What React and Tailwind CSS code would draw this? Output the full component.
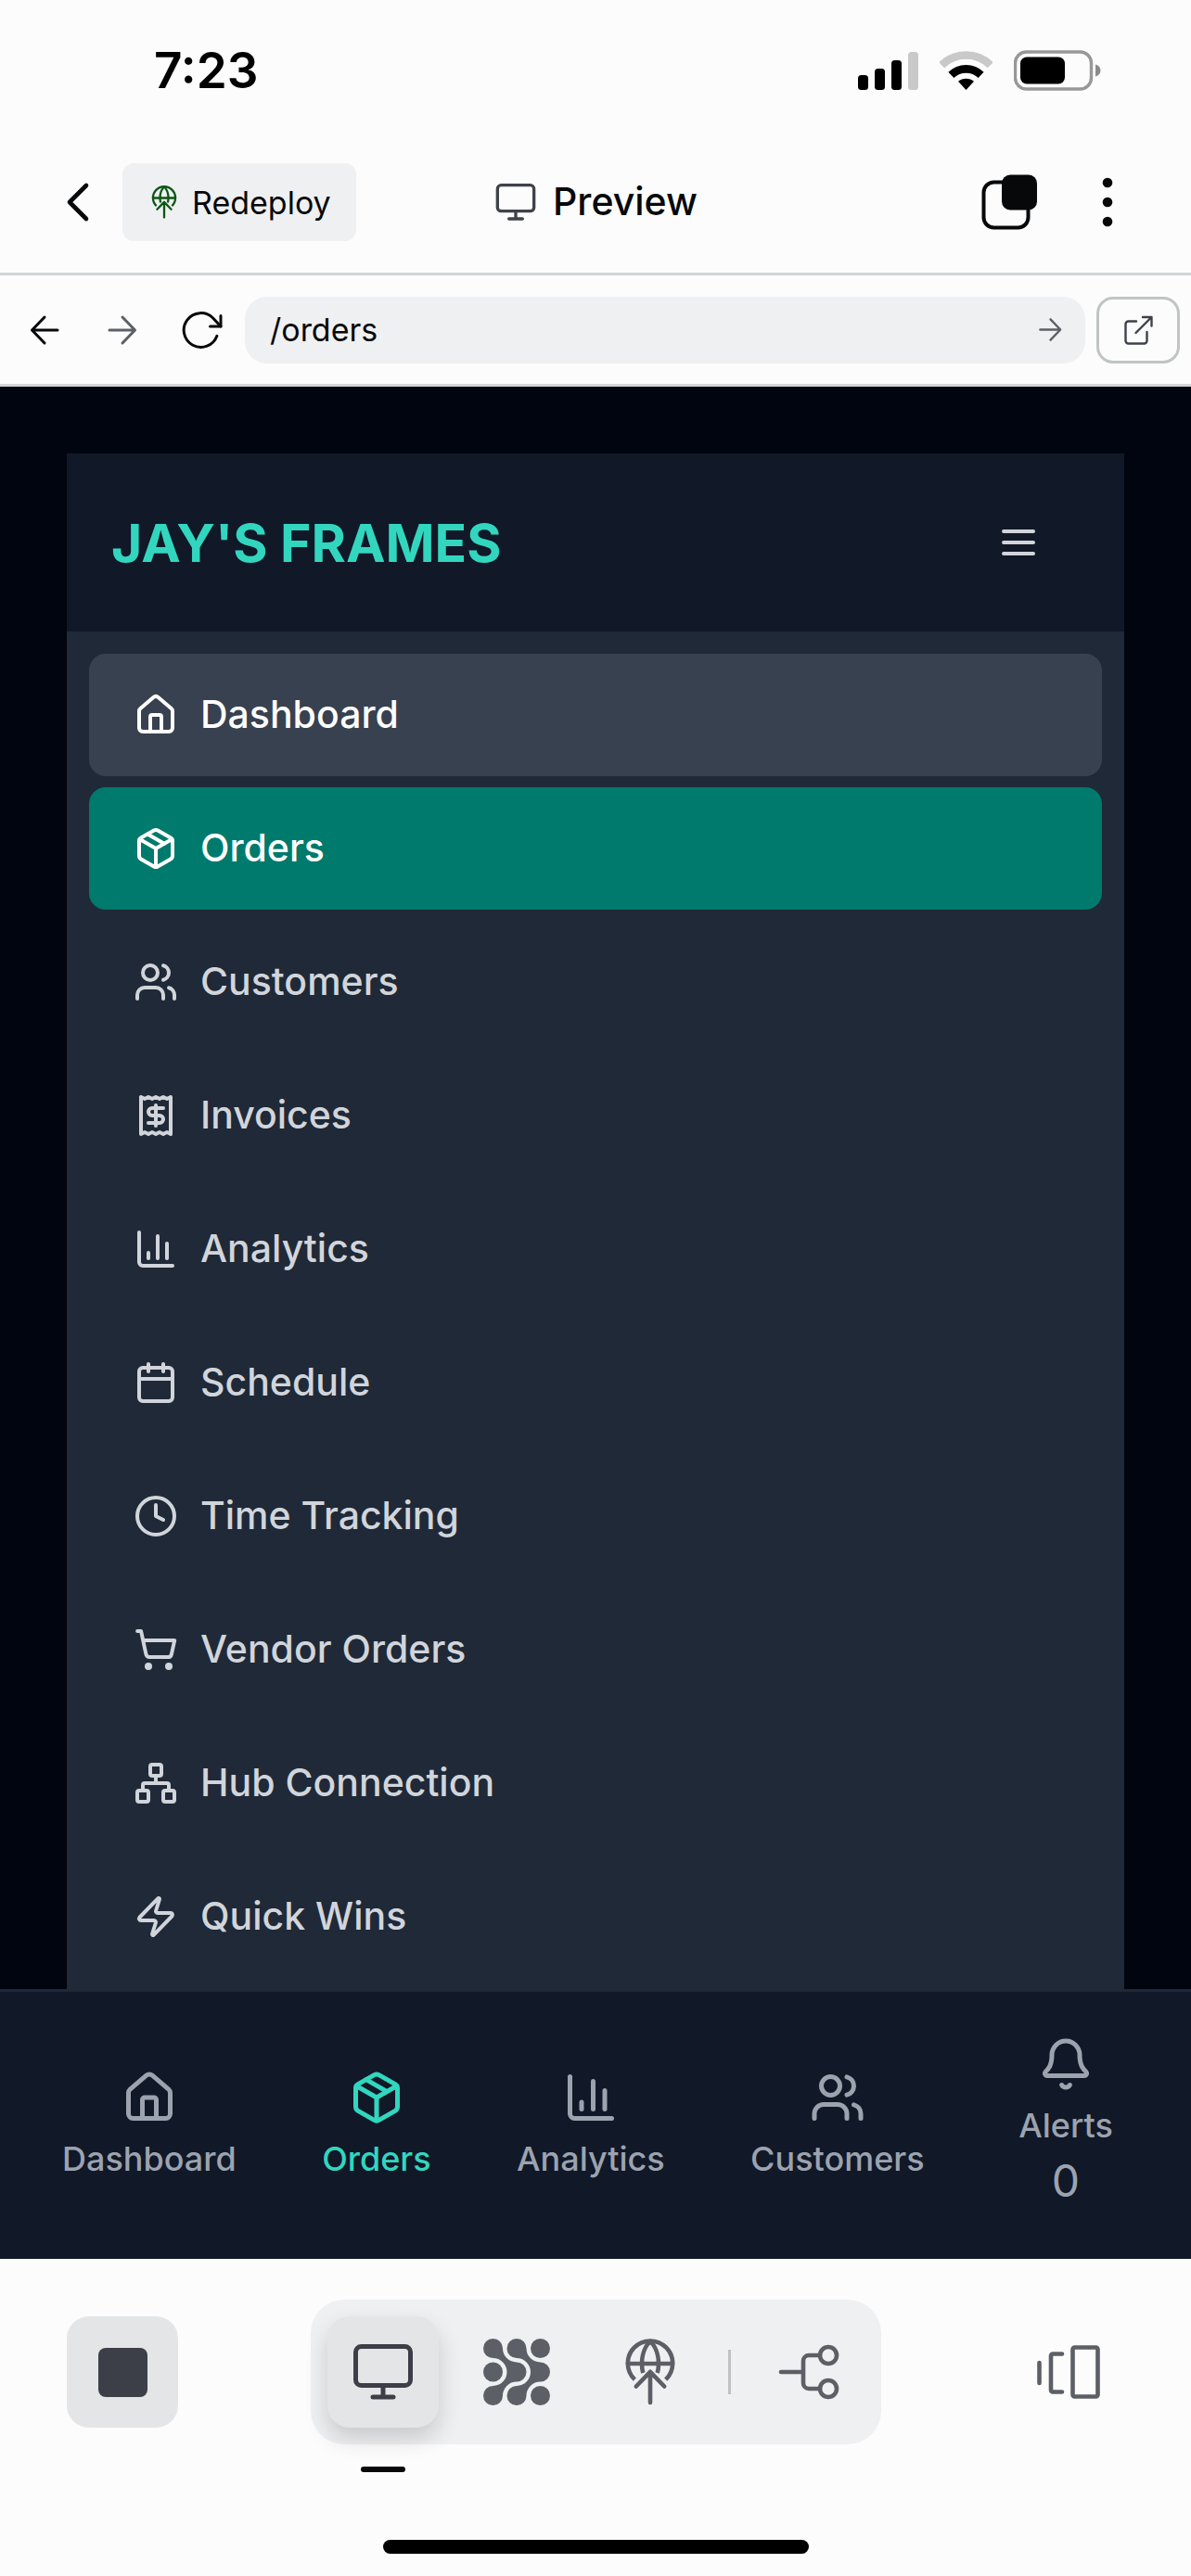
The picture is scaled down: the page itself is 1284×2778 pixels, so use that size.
import {
  Bell,
  Calendar,
  ChartColumn,
  Clock,
  House,
  Network,
  Package,
  Receipt,
  ShoppingCart,
  Users,
  Zap,
} from "lucide-react";

const stroke = {
  fill: "none",
  stroke: "currentColor",
  strokeLinecap: "round",
  strokeLinejoin: "round",
};

function MonitorIcon({ className }) {
  return (
    <svg viewBox="0 0 72 72" className={className} strokeWidth="5" {...stroke}>
      <rect x="6.5" y="8.5" width="59" height="42" rx="6" />
      <path d="M36 50.5V63M25 63h22" />
    </svg>
  );
}

function PublishIcon({ className }) {
  return (
    <svg viewBox="0 0 72 72" className={className} strokeWidth="4.6" {...stroke}>
      <path d="M12 27h48" />
      <path strokeLinecap="butt" d="M19.3 44.2A24.2 24.2 0 1 1 52.7 44.2" />
      <path strokeLinecap="butt" d="M28.3 37C27.4 34 27 30.6 27 27C27 17.5 30.4 8 36 3C41.6 8 45 17.5 45 27C45 30.6 44.6 34 43.7 37" />
      <path d="M36 36v33M20.8 51.5L36 35.8L51.2 51.5" />
    </svg>
  );
}

function AgentIcon({ className }) {
  const chain =
    "M21 10.5A15 15 0 0 0 36 25.5A10.5 10.5 0 0 1 36 46.5A15 15 0 0 0 21 61.5A10.5 10.5 0 1 1 10.5 51A15 15 0 0 0 10.5 21A10.5 10.5 0 1 1 21 10.5Z";
  return (
    <svg viewBox="0 0 72 72" className={className} fill="currentColor">
      <path d={chain} />
      <path d={chain} transform="translate(25.5 0)" />
      <circle cx="61.5" cy="10.5" r="10.5" />
      <circle cx="10.5" cy="36" r="10.5" />
      <circle cx="61.5" cy="61.5" r="10.5" />
    </svg>
  );
}

function BranchIcon({ className }) {
  return (
    <svg viewBox="0 0 72 72" className={className} strokeWidth="4.6" {...stroke}>
      <path d="M6 36h24M48 18H36a6 6 0 0 0-6 6v24a6 6 0 0 0 6 6h12" />
      <circle cx="57" cy="18" r="9" />
      <circle cx="57" cy="54" r="9" />
    </svg>
  );
}

function PanesIcon({ className }) {
  return (
    <svg viewBox="0 0 72 72" className={className} strokeWidth="4.6" {...stroke}>
      <path d="M4.5 26v22M29 16.5H19a2 2 0 0 0-2 2v37a2 2 0 0 0 2 2h10" />
      <rect x="40.5" y="9.5" width="27" height="53" rx="2" />
    </svg>
  );
}

function ArrowIcon({ className, flip }) {
  return (
    <svg viewBox="0 0 34 34" className={className} strokeWidth="3" {...stroke}>
      <path d={flip ? "M31 17H4M17 3L3.5 17L17 31" : "M3 17h27M17 3l13.5 14L17 31"} />
    </svg>
  );
}

function StatusIcons() {
  return (
    <div className="flex items-center gap-[23px]">
      <svg viewBox="0 0 65 42" className="h-[42px] w-[65px]">
        <rect x="0" y="26" width="11" height="16" rx="3.5" />
        <rect x="18" y="19" width="11" height="23" rx="3.5" />
        <rect x="36" y="10" width="11" height="32" rx="3.5" />
        <rect x="54" y="1" width="11" height="41" rx="3.5" fill="#c9c9c9" />
      </svg>
      <svg viewBox="0 0 57 42" className="h-[42px] w-[57px]" fill="none" strokeWidth="8.6">
        <path d="M2.2 15.3A37.5 37.5 0 0 1 54.8 15.3" stroke="#c9c9c9" />
        <path d="M12.4 25.9A23 23 0 0 1 44.6 25.9" stroke="#000" />
        <path d="M20 32.8A13 13 0 0 1 37 32.8L28.5 42Z" fill="#000" stroke="none" />
      </svg>
      <svg viewBox="0 0 94 44" className="h-[44px] w-[94px]">
        <rect x="1.5" y="2" width="82" height="40" rx="12" fill="none" stroke="#989898" strokeWidth="3.4" />
        <rect x="7" y="7.5" width="48" height="29" rx="7" />
        <path d="M88 15.5c3.5 1 5.5 3.5 5.5 6.5s-2 5.5-5.5 6.5z" fill="#8a8a8a" />
      </svg>
    </div>
  );
}

const menu = [
  { label: "Dashboard", Icon: House, look: "bg-[#384150] text-white" },
  { label: "Orders", Icon: Package, look: "bg-[#007a6c] text-white" },
  { label: "Customers", Icon: Users },
  { label: "Invoices", Icon: Receipt },
  { label: "Analytics", Icon: ChartColumn },
  { label: "Schedule", Icon: Calendar },
  { label: "Time Tracking", Icon: Clock },
  { label: "Vendor Orders", Icon: ShoppingCart },
  { label: "Hub Connection", Icon: Network },
  { label: "Quick Wins", Icon: Zap },
];

const tabs = [
  { label: "Dashboard", Icon: House },
  { label: "Orders", Icon: Package, active: true },
  { label: "Analytics", Icon: ChartColumn },
  { label: "Customers", Icon: Users },
  { label: "Alerts", Icon: Bell, count: 0 },
];

export default function App() {
  return (
    <div className="flex min-h-screen flex-col bg-[#fcfcfd] font-['Inter',sans-serif] text-[#07080a]">
      <div className="flex h-[142px] items-center justify-between pt-[10px] pr-[97px] pl-[166px] text-black">
        <span className="text-[53px] leading-none font-semibold">7:23</span>
        <StatusIcons />
      </div>

      <header className="grid h-[155px] grid-cols-[1fr_auto_1fr] items-center border-b-[3px] border-[#d3d5d6] px-[66px]">
        <div className="flex items-center gap-[30px]">
          <button type="button" aria-label="Back">
            <svg viewBox="0 0 36 48" className="h-12 w-9" strokeWidth="4.6" {...stroke}>
              <path d="M27 6L9 24l18 18" />
            </svg>
          </button>
          <button type="button" className="flex h-[84px] items-center gap-3 rounded-xl bg-[#eff0f2] px-[27px] text-[34px]">
            <PublishIcon className="size-9 text-[#0b5714]" />
            Redeploy
          </button>
        </div>
        <h1 className="flex items-center gap-4 text-[41px] font-medium">
          <MonitorIcon className="size-12 text-[#3f424a]" />
          Preview
        </h1>
        <div className="mr-3 flex items-center justify-end gap-[64px]">
          <button type="button" aria-label="Tabs">
            <svg viewBox="0 0 60 60" className="size-[60px]">
              <rect x="2.5" y="8.5" width="48" height="49" rx="11" fill="none" stroke="currentColor" strokeWidth="4" />
              <rect x="22" y="0.5" width="38" height="38" rx="9" fill="currentColor" />
            </svg>
          </button>
          <button type="button" aria-label="More">
            <svg viewBox="0 0 24 60" className="h-[60px] w-6" fill="currentColor">
              <circle cx="12" cy="9" r="5.3" />
              <circle cx="12" cy="30" r="5.3" />
              <circle cx="12" cy="51" r="5.3" />
            </svg>
          </button>
        </div>
      </header>

      <div className="flex h-[120px] items-center border-b-[3px] border-[#d3d5d6] px-3">
        <button type="button" aria-label="Go back" className="flex w-[72px] justify-center">
          <ArrowIcon flip className="size-[34px]" />
        </button>
        <button type="button" aria-label="Go forward" className="ml-3 flex w-[72px] justify-center text-[#5c5f66]">
          <ArrowIcon className="size-[34px]" />
        </button>
        <button type="button" aria-label="Reload" className="ml-3 flex w-[72px] justify-center">
          <svg viewBox="0 0 48 48" className="size-12" strokeWidth="3" {...stroke}>
            <path d="M41.9 30.3A18.4 18.4 0 1 1 37.6 11L46 20" />
            <path d="M46 8.5V20H34.5" />
          </svg>
        </button>
        <form className="ml-3 flex h-[72px] min-w-0 flex-1 items-center rounded-3xl bg-[#eff0f2] pr-6 pl-[27px]">
          <input
            aria-label="Page path"
            defaultValue="/orders"
            className="min-w-0 flex-1 bg-transparent text-[34px] outline-none"
          />
          <button type="button" aria-label="Open path" className="text-[#5c5f66]">
            <ArrowIcon className="size-[27px]" />
          </button>
        </form>
        <button
          type="button"
          aria-label="Open in new tab"
          className="ml-3 flex h-[72px] w-[90px] items-center justify-center rounded-[18px] border-[3px] border-[#c0c4c5] text-[#3f424a]"
        >
          <svg viewBox="0 0 36 36" className="size-9" strokeWidth="2.4" {...stroke}>
            <path d="M16 8.5H7.5a3 3 0 0 0-3 3v18a3 3 0 0 0 3 3h17a3 3 0 0 0 3-3V20" />
            <path d="M23 4h9.5v9.5M32 4.5L15.5 21" />
          </svg>
        </button>
      </div>

      <main className="flex flex-1 flex-col bg-[#01050f] px-[72px] pt-[72px]">
        <div className="flex h-48 items-center justify-between bg-[#111827] pr-[90px] pl-12">
          <h2 className="text-[57px] leading-none font-bold text-[#32d6bf]">JAY&apos;S FRAMES</h2>
          <button type="button" aria-label="Menu" className="text-[#d1d5db]">
            <svg viewBox="0 0 24 24" className="size-12" strokeWidth="2" {...stroke}>
              <path d="M4 6h16M4 12h16M4 18h16" />
            </svg>
          </button>
        </div>
        <nav className="flex flex-1 flex-col gap-3 bg-[#202937] px-6 pt-6 pb-3">
          {menu.map(({ label, Icon, look }) => (
            <a
              key={label}
              href="#"
              className={`flex h-[132px] items-center gap-6 rounded-[18px] px-12 text-[41px] font-medium ${look ?? "text-[#d1d5db]"}`}
            >
              <Icon className="size-12" />
              {label}
            </a>
          ))}
        </nav>
      </main>

      <nav className="flex h-[291px] items-center justify-between border-t-[3px] border-[#202937] bg-[#111827] pr-[75px] pl-[67px]">
        {tabs.map(({ label, Icon, active, count }) => (
          <a
            key={label}
            href="#"
            className={`flex flex-col items-center ${count === undefined ? "" : "w-[120px]"} ${active ? "text-[#32d6bf]" : "text-[#9ca3af]"}`}
          >
            <Icon className="size-[60px]" />
            <span className="mt-3 text-[36px] leading-[48px] font-medium">{label}</span>
            {count !== undefined && <span className="text-[48px] leading-[72px]">{count}</span>}
          </a>
        ))}
      </nav>

      <footer className="flex flex-col pt-[44px] pb-6">
        <div className="flex items-center justify-between px-[72px] text-[#5c5f66]">
          <button type="button" aria-label="Stop" className="flex size-[120px] items-center justify-center rounded-3xl bg-[#e4e5e7]">
            <span className="size-[53px] rounded-lg bg-[#3c3f47]" />
          </button>
          <div className="flex items-center gap-6 rounded-[36px] bg-[#eff0f2] p-[18px]">
            <button
              type="button"
              aria-label="Preview"
              className="relative flex size-[120px] items-center justify-center rounded-3xl bg-[#e4e5e7] text-[#3c3f47] shadow-[0_12px_24px_rgba(0,0,0,0.16)]"
            >
              <MonitorIcon className="size-[72px]" />
              <span className="absolute -bottom-12 h-1.5 w-12 rounded-full bg-[#07080a]" />
            </button>
            <button type="button" aria-label="Agent" className="flex size-[120px] items-center justify-center">
              <AgentIcon className="size-[72px]" />
            </button>
            <button type="button" aria-label="Publish" className="flex size-[120px] items-center justify-center">
              <PublishIcon className="size-[72px]" />
            </button>
            <span className="h-12 w-[3px] bg-[#c0c1c4]" />
            <button type="button" aria-label="Branches" className="flex size-[120px] items-center justify-center">
              <BranchIcon className="size-[72px]" />
            </button>
          </div>
          <button type="button" aria-label="Switch panes" className="flex size-[120px] items-center justify-center">
            <PanesIcon className="size-[72px]" />
          </button>
        </div>
        <div className="mt-[103px] h-[15px] w-[459px] self-center rounded-full bg-black" />
      </footer>
    </div>
  );
}
